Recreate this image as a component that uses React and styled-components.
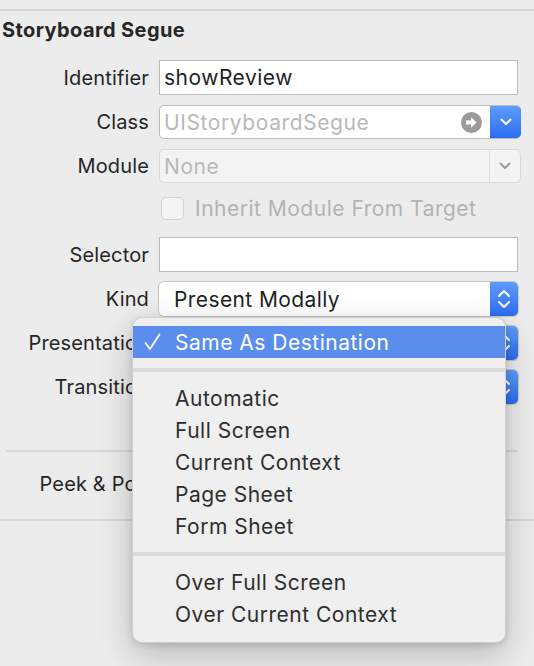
import React from "react";
import styled, { createGlobalStyle } from "styled-components";

const GlobalStyle = createGlobalStyle`
  html, body {
    margin: 0;
    padding: 0;
    background: #ececec;
  }
  body {
    font-family: "Inter", "Liberation Sans", sans-serif;
    color: #262626;
    -webkit-font-smoothing: antialiased;
  }
`;

const Page = styled.div`
  position: relative;
  width: 534px;
  height: 666px;
  overflow: hidden;
  background: #ececec;
`;

const TopRule = styled.div`
  height: 9px;
  border-bottom: 2px solid #d6d6d6;
`;

const Title = styled.h2`
  margin: 0;
  padding: 7px 0 0 2px;
  height: 40px;
  box-sizing: border-box;
  font-size: 20px;
  line-height: 24px;
  font-weight: 700;
  letter-spacing: 0.4px;
  color: #262626;
`;

const Form = styled.div`
  display: grid;
  grid-template-columns: 149px 1fr;
  column-gap: 10px;
  row-gap: 10px;
  padding: 9px 16px 0 0;
`;

const Label = styled.div`
  height: ${(p) => p.$h || 34}px;
  display: flex;
  align-items: center;
  justify-content: flex-end;
  font-size: 20px;
  letter-spacing: 0.15px;
  white-space: nowrap;
  color: #262626;
`;

const TextField = styled.div`
  height: ${(p) => p.$h || 35}px;
  box-sizing: border-box;
  background: #fff;
  border: 1px solid #bcbcbc;
  display: flex;
  align-items: center;
  padding-left: 4px;
  font-size: 21px;
  letter-spacing: 0.5px;
  color: #1f1f1f;
`;

const Combo = styled.div`
  height: 34px;
  margin-right: -3px;
  display: flex;
  box-sizing: border-box;
  border-radius: 5px;
  overflow: hidden;
  background: ${(p) => (p.$disabled ? "#f3f3f3" : "#fff")};
  border: 1px solid ${(p) => (p.$disabled ? "#d9d9d9" : "#bcbcbc")};
  border-right: none;
`;

const ComboText = styled.div`
  flex: 1;
  display: flex;
  align-items: center;
  justify-content: space-between;
  padding: 0 8px 0 4px;
  font-size: 21px;
  letter-spacing: 0.6px;
  color: #b9b9b9;
`;

const BlueButton = styled.div`
  width: ${(p) => p.$w || 31}px;
  flex-shrink: 0;
  display: flex;
  align-items: center;
  justify-content: center;
  background: linear-gradient(#5e9cfa, #2b6df1);
`;

const GrayButton = styled.div`
  width: 30px;
  flex-shrink: 0;
  display: flex;
  align-items: center;
  justify-content: center;
  border-left: 1px solid #dedede;
  border-right: 1px solid #d9d9d9;
  border-radius: 0 5px 5px 0;
`;

const Popup = styled.div`
  height: 34px;
  display: flex;
  box-sizing: border-box;
  border-radius: 5px;
  overflow: hidden;
  background: #fff;
  box-shadow: 0 0 0 1px #c6c6c6, 0 1px 1px rgba(0, 0, 0, 0.12);
`;

const PopupText = styled.div`
  flex: 1;
  display: flex;
  align-items: center;
  padding-left: 15px;
  font-size: 21px;
  letter-spacing: 0.4px;
  color: #1f1f1f;
`;

const CheckRow = styled.div`
  height: 34px;
  display: flex;
  align-items: center;
  gap: 11px;
  padding: 0 0 3px 2px;
  box-sizing: border-box;
  font-size: 21px;
  letter-spacing: 0.5px;
  color: #b3b3b3;
`;

const CheckBox = styled.div`
  width: 23px;
  height: 23px;
  box-sizing: border-box;
  border: 1px solid #d3d3d3;
  border-radius: 5px;
  background: #f4f4f4;
`;

const Section = styled.div`
  margin: 46px 16px 0 6px;
  border-top: 2px solid #d8d8d8;
  height: 67px;
  display: flex;
  align-items: center;
`;

const SectionLabel = styled.div`
  width: 143px;
  text-align: right;
  font-size: 20px;
  letter-spacing: 0.15px;
  white-space: nowrap;
  padding-bottom: 3px;
`;

const BottomRule = styled.div`
  border-top: 2px solid #d8d8d8;
`;

const Menu = styled.div`
  position: absolute;
  left: 132px;
  top: 317px;
  width: 374px;
  box-sizing: border-box;
  padding: 8px 0 12px;
  background: #efefef;
  border-radius: 10px;
  border: 1px solid rgba(0, 0, 0, 0.13);
  box-shadow: 0 12px 34px rgba(0, 0, 0, 0.22), 0 2px 6px rgba(0, 0, 0, 0.12);
`;

const MenuItem = styled.div`
  height: 32px;
  display: flex;
  align-items: center;
  padding-left: 42px;
  position: relative;
  font-size: 21px;
  letter-spacing: 0.5px;
  color: ${(p) => (p.$active ? "#fff" : "#2e2e2e")};
  background: ${(p) => (p.$active ? "#5b8eec" : "transparent")};
`;

const CheckMark = styled.svg`
  position: absolute;
  left: 11px;
  top: 7px;
`;

const MenuSeparator = styled.div`
  height: 24px;
  display: flex;
  align-items: center;

  &::after {
    content: "";
    flex: 1;
    height: 4px;
    background: #dcdcdc;
  }
`;

const ChevronDown = ({ color = "#fff" }) => (
  <svg width="12" height="8" viewBox="0 0 12 8">
    <path d="M1.5 1.5 L6 6 L10.5 1.5" fill="none" stroke={color} strokeWidth="2" strokeLinecap="round" strokeLinejoin="round" />
  </svg>
);

const ChevronUpDown = () => (
  <svg width="14" height="22" viewBox="0 0 14 22">
    <path d="M2 8 L7 3 L12 8" fill="none" stroke="#fff" strokeWidth="2" strokeLinecap="round" strokeLinejoin="round" />
    <path d="M2 14 L7 19 L12 14" fill="none" stroke="#fff" strokeWidth="2" strokeLinecap="round" strokeLinejoin="round" />
  </svg>
);

const ArrowCircle = () => (
  <svg width="21" height="21" viewBox="0 0 21 21">
    <circle cx="10.5" cy="10.5" r="10.5" fill="#9b9b9b" />
    <path d="M5 8.6 H10 V5.2 L15.6 10.5 L10 15.8 V12.4 H5 Z" fill="#fff" />
  </svg>
);

const menuGroups = [
  ["Same As Destination"],
  ["Automatic", "Full Screen", "Current Context", "Page Sheet", "Form Sheet"],
  ["Over Full Screen", "Over Current Context"],
];

export default function App() {
  return (
    <Page>
      <GlobalStyle />
      <TopRule />
      <Title>Storyboard Segue</Title>
      <Form>
        <Label $h={35}>Identifier</Label>
        <TextField>showReview</TextField>

        <Label>Class</Label>
        <Combo>
          <ComboText>
            UIStoryboardSegue
            <ArrowCircle />
          </ComboText>
          <BlueButton>
            <ChevronDown />
          </BlueButton>
        </Combo>

        <Label>Module</Label>
        <Combo $disabled>
          <ComboText>None</ComboText>
          <GrayButton>
            <ChevronDown color="#9a9a9a" />
          </GrayButton>
        </Combo>

        <div />
        <CheckRow>
          <CheckBox />
          Inherit Module From Target
        </CheckRow>

        <Label $h={35}>Selector</Label>
        <TextField />

        <Label>Kind</Label>
        <Popup>
          <PopupText>Present Modally</PopupText>
          <BlueButton $w={28}>
            <ChevronUpDown />
          </BlueButton>
        </Popup>

        <Label>Presentation</Label>
        <Popup>
          <PopupText />
          <BlueButton $w={28}>
            <ChevronUpDown />
          </BlueButton>
        </Popup>

        <Label>Transition</Label>
        <Popup>
          <PopupText />
          <BlueButton $w={28}>
            <ChevronUpDown />
          </BlueButton>
        </Popup>
      </Form>

      <Section>
        <SectionLabel>Peek &amp; Pop</SectionLabel>
      </Section>
      <BottomRule />

      <Menu>
        {menuGroups.map((group, gi) => (
          <React.Fragment key={gi}>
            {gi > 0 && <MenuSeparator />}
            {group.map((item) => (
              <MenuItem key={item} $active={item === "Same As Destination"}>
                {item === "Same As Destination" && (
                  <CheckMark width="17" height="18" viewBox="0 0 17 18">
                    <path d="M1.5 10 L6 16 L15.5 1.5" fill="none" stroke="#fff" strokeWidth="1.8" strokeLinecap="round" strokeLinejoin="round" />
                  </CheckMark>
                )}
                {item}
              </MenuItem>
            ))}
          </React.Fragment>
        ))}
      </Menu>
    </Page>
  );
}
